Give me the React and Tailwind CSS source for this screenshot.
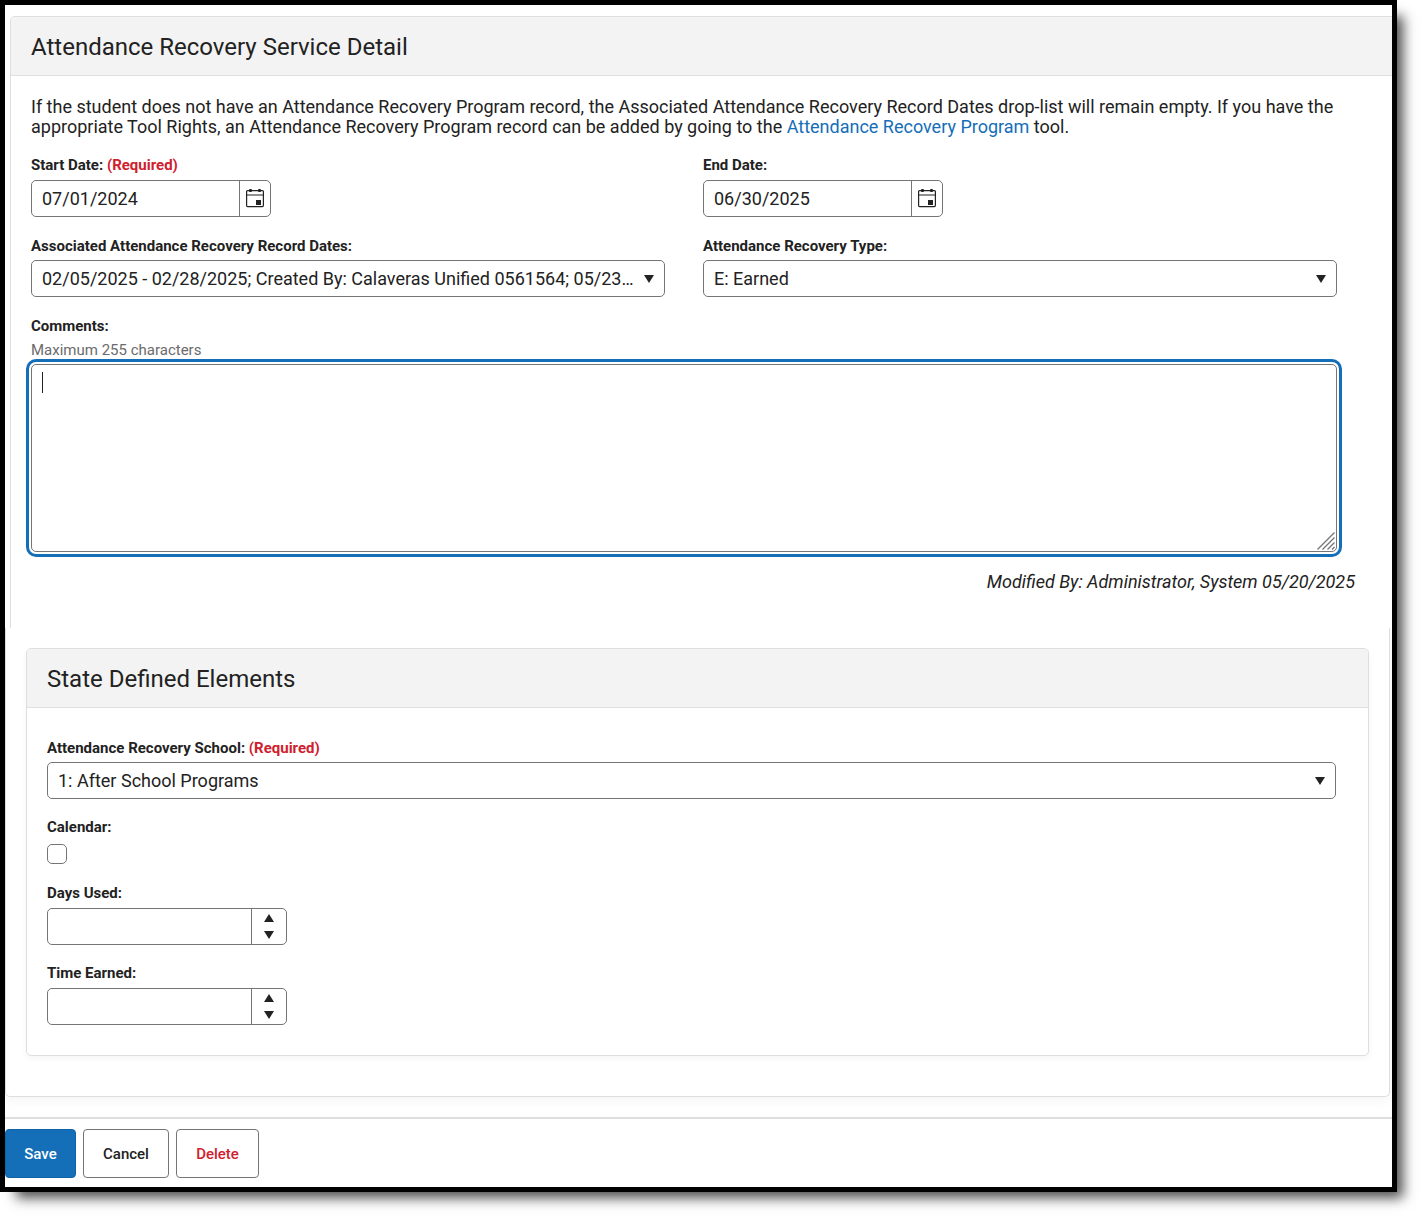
import { useState } from "react";

const fieldBorder = "border border-[#757575] rounded-[5px] bg-white";

function Label({ htmlFor, required, children }) {
  return (
    <label htmlFor={htmlFor} className="block w-fit text-[15px] leading-5 font-bold">
      {children}
      {required && <span className="text-[#d0202e]"> (Required)</span>}
    </label>
  );
}

function CalendarIcon() {
  return (
    <svg className="w-[18px] h-[20px]" viewBox="0 0 18 20" fill="none">
      <rect x="0.6" y="2.6" width="16.8" height="16" rx="1" stroke="#222" strokeWidth="1.2" />
      <path d="M1 7H17" stroke="#222" strokeWidth="1" />
      <rect x="3" y="1" width="3" height="3" rx="1" fill="#222" />
      <rect x="12" y="1" width="3" height="3" rx="1" fill="#222" />
      <rect x="10" y="12" width="5" height="5" fill="#222" />
    </svg>
  );
}

function Triangle({ up }) {
  return (
    <svg className="w-[10px] h-[8px]" viewBox="0 0 10 8" fill="#222">
      <path d={up ? "M0 8L5 0L10 8Z" : "M0 0H10L5 8Z"} />
    </svg>
  );
}

function DateField({ id, label, required, value }) {
  return (
    <div>
      <Label htmlFor={id} required={required}>{label}</Label>
      <div className={`mt-[5px] flex w-[240px] h-[37px] ${fieldBorder}`}>
        <input id={id} type="text" defaultValue={value} className="min-w-0 flex-1 px-[10px] outline-none" />
        <button type="button" aria-label={`Open calendar for ${label}`} className="w-[31px] border-l border-[#757575] flex items-center justify-center pb-[2px]">
          <CalendarIcon />
        </button>
      </div>
    </div>
  );
}

function SelectField({ id, label, required, options }) {
  return (
    <div className="min-w-0">
      <Label htmlFor={id} required={required}>{label}</Label>
      <div className="relative mt-1">
        <select id={id} className={`appearance-none w-full h-[37px] pl-[10px] pr-[28px] text-ellipsis overflow-hidden whitespace-nowrap ${fieldBorder}`}>
          {options.map((o) => (
            <option key={o}>{o}</option>
          ))}
        </select>
        <span className="absolute right-[11px] inset-y-0 flex items-center pointer-events-none">
          <Triangle />
        </span>
      </div>
    </div>
  );
}

function NumberField({ id, label }) {
  const [value, setValue] = useState("");
  const step = (n) => setValue(String((Number(value) || 0) + n));

  return (
    <div>
      <Label htmlFor={id}>{label}</Label>
      <div className={`mt-[5px] flex w-[240px] h-[37px] ${fieldBorder}`}>
        <input
          id={id}
          type="text"
          inputMode="numeric"
          value={value}
          onChange={(e) => setValue(e.target.value)}
          className="min-w-0 flex-1 px-[10px] outline-none"
        />
        <div className="w-[35px] border-l border-[#757575] flex flex-col">
          <button type="button" aria-label={`Increase ${label}`} onClick={() => step(1)} className="flex-1 flex items-center justify-center">
            <Triangle up />
          </button>
          <button type="button" aria-label={`Decrease ${label}`} onClick={() => step(-1)} className="flex-1 flex items-center justify-center">
            <Triangle />
          </button>
        </div>
      </div>
    </div>
  );
}

export default function App() {
  return (
    <div className="bg-white pr-[25px] pb-[25px] font-[Roboto,sans-serif] text-[18px] leading-5 text-[#222]">
      <main className="border-5 border-black bg-white shadow-[11px_11px_12px_-5px_rgba(0,0,0,0.7)]">
        {/* Service detail */}
        <section className="mt-[11px] ml-[5px] border-l border-t border-[#dedede] rounded-tl-[5px] pb-9">
          <h1 className="h-[59px] flex items-center pl-5 pt-[2px] bg-[#f3f3f3] border-b border-[#dedede] rounded-tl-[4px] text-[24px]">
            Attendance Recovery Service Detail
          </h1>

          <div className="pl-5 pr-[55px] pt-[21px]">
            <p className="mb-[18px]">
              If the student does not have an Attendance Recovery Program record, the Associated Attendance Recovery Record
              Dates drop-list will remain empty. If you have the appropriate Tool Rights, an Attendance Recovery Program
              record can be added by going to the{" "}
              <a href="#program" className="text-[#146eb8]">Attendance Recovery Program</a> tool.
            </p>

            <div className="grid grid-cols-2 gap-x-[38px] gap-y-[19px]">
              <DateField id="start" label="Start Date:" required value="07/01/2024" />
              <DateField id="end" label="End Date:" value="06/30/2025" />
              <SelectField
                id="dates"
                label="Associated Attendance Recovery Record Dates:"
                options={["02/05/2025 - 02/28/2025; Created By: Calaveras Unified 0561564; 05/23/2025"]}
              />
              <SelectField id="type" label="Attendance Recovery Type:" options={["E: Earned"]} />
            </div>

            <div className="mt-[19px]">
              <Label htmlFor="comments">Comments:</Label>
              <p id="comments-hint" className="mt-1 text-[15px] text-[#6b6b6b]">Maximum 255 characters</p>
              <div className="relative mt-1">
                <textarea
                  id="comments"
                  aria-describedby="comments-hint"
                  maxLength={255}
                  className={`block w-full h-[188px] px-[10px] py-2 resize-none outline-3 outline-offset-2 outline-[#146eb8] ${fieldBorder}`}
                />
                <span className="absolute left-[11px] top-2 w-px h-[21px] bg-[#222]" />
                <svg className="absolute right-[2px] bottom-[2px] w-[18px] h-[18px] pointer-events-none" viewBox="0 0 18 18" stroke="#757575" strokeWidth="1.3">
                  <path d="M0.5 17.5L17.5 0.5M5.5 17.5L17.5 5.5M10.5 17.5L17.5 10.5M15 17.5L17.5 15" />
                </svg>
              </div>
            </div>
          </div>

          <p className="mt-5 pr-[37px] text-right italic">Modified By: Administrator, System 05/20/2025</p>
        </section>

        {/* State defined elements */}
        <section className="mr-[2px] border-x border-b border-[#dedede] rounded-b-[5px] pt-5 pl-5 pr-5 pb-10 shadow-[0_6px_10px_rgba(0,0,0,0.03)]">
          <div className="border border-[#dedede] rounded-[5px] shadow-[0_3px_6px_rgba(0,0,0,0.04)]">
            <h2 className="h-[59px] flex items-center pl-5 pt-[2px] bg-[#f3f3f3] border-b border-[#dedede] rounded-t-[4px] text-[24px]">
              State Defined Elements
            </h2>
            <div className="pl-5 pr-8 py-[30px]">
              <SelectField id="school" label="Attendance Recovery School:" required options={["1: After School Programs"]} />
              <div className="mt-[18px] mb-[19px]">
                <Label htmlFor="calendar">Calendar:</Label>
                <input id="calendar" type="checkbox" className={`mt-[7px] block appearance-none w-5 h-5 checked:bg-[#146eb8] ${fieldBorder}`} />
              </div>
              <div className="flex flex-col gap-[18px]">
                <NumberField id="days" label="Days Used:" />
                <NumberField id="time" label="Time Earned:" />
              </div>
            </div>
          </div>
        </section>

        <footer className="mt-5 border-t-2 border-[#dedede] pt-[10px] pb-[9px] flex gap-[7px] text-[15px] font-medium">
          <button type="button" className="w-[71px] h-[49px] rounded-[4px] border border-[#0f64a8] bg-[#146eb8] text-white">
            Save
          </button>
          <button type="button" className="w-[86px] h-[49px] rounded-[4px] border border-[#757575] bg-white">
            Cancel
          </button>
          <button type="button" className="w-[83px] h-[49px] rounded-[4px] border border-[#757575] bg-white text-[#d0202e]">
            Delete
          </button>
        </footer>
      </main>
    </div>
  );
}
